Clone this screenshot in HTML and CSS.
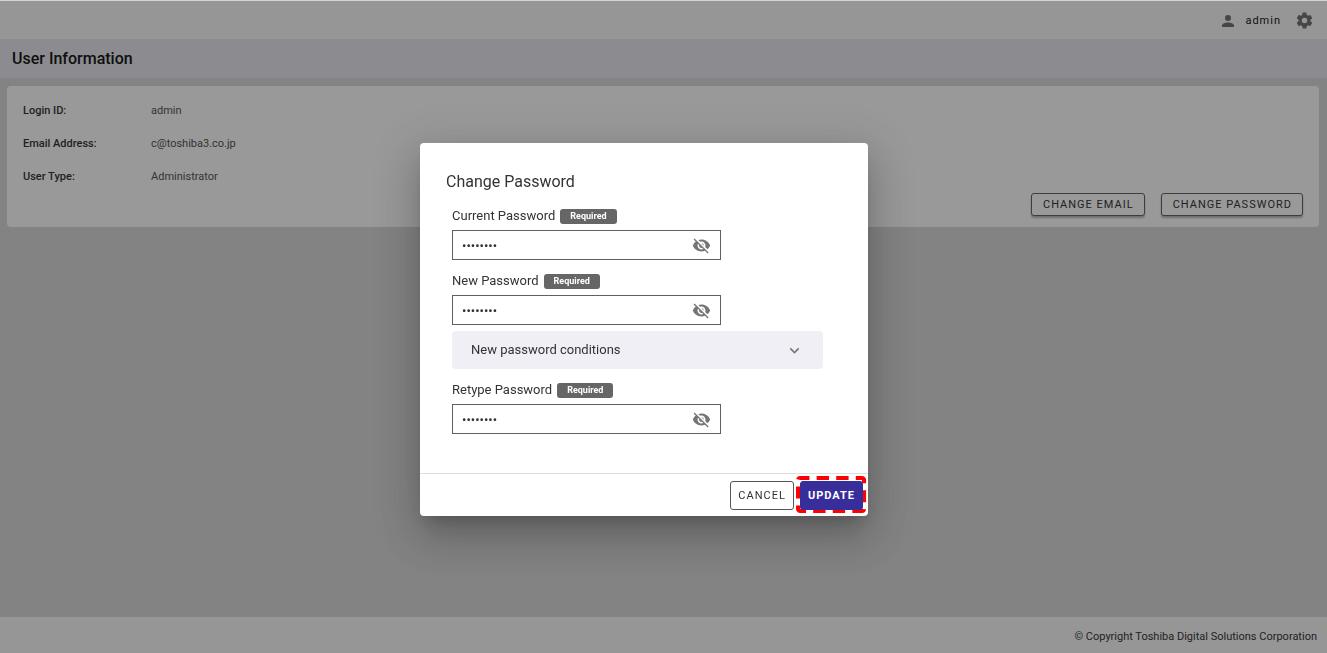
FILE: index.html
```html
<!DOCTYPE html>
<html lang="en">
<head>
<meta charset="utf-8">
<title>User Information</title>
<link rel="stylesheet" href="styles.css">
</head>
<body>
<svg class="sprite" aria-hidden="true">
  <symbol id="eye-off" viewBox="0 0 24 24"><path d="M12 7c2.76 0 5 2.24 5 5 0 .65-.13 1.26-.36 1.83l2.92 2.92c1.51-1.26 2.7-2.89 3.43-4.75-1.73-4.39-6-7.5-11-7.5-1.4 0-2.74.25-3.98.7l2.16 2.16C10.74 7.13 11.35 7 12 7zM2 4.27l2.28 2.28.46.46C3.08 8.3 1.78 10.02 1 12c1.73 4.39 6 7.5 11 7.5 1.55 0 3.03-.3 4.38-.84l.42.42L19.73 22 21 20.73 3.27 3 2 4.27zM7.53 9.8l1.55 1.55c-.05.21-.08.43-.08.65 0 1.66 1.34 3 3 3 .22 0 .44-.03.65-.08l1.55 1.55c-.67.33-1.41.53-2.2.53-2.76 0-5-2.24-5-5 0-.79.2-1.53.53-2.2zm4.31-.78 3.15 3.15.02-.16c0-1.66-1.34-3-3-3l-.17.01z"/></symbol>
</svg>
<div class="page">
  <header class="topbar">
    <button class="user" type="button">
      <svg class="user-icon" viewBox="0 0 24 24" aria-hidden="true"><path d="M12 4a4 4 0 1 1 0 8 4 4 0 0 1 0-8zm0 10c4.42 0 8 1.79 8 4v2H4v-2c0-2.21 3.58-4 8-4z"/></svg>
      <span>admin</span>
    </button>
    <button class="icon-button" type="button" aria-label="Settings">
      <svg class="gear-icon" viewBox="0 0 24 24" aria-hidden="true"><path d="M12 15.5A3.5 3.5 0 0 1 8.5 12 3.5 3.5 0 0 1 12 8.5a3.5 3.5 0 0 1 3.5 3.5 3.5 3.5 0 0 1-3.5 3.5m7.43-2.53c.04-.32.07-.64.07-.97s-.03-.66-.07-1l2.11-1.63c.19-.15.24-.42.12-.64l-2-3.46c-.12-.22-.39-.31-.61-.22l-2.49 1c-.52-.39-1.06-.73-1.69-.98l-.37-2.65A.506.506 0 0 0 14 2h-4c-.25 0-.46.18-.5.42l-.37 2.65c-.63.25-1.17.59-1.69.98l-2.49-1c-.22-.09-.49 0-.61.22l-2 3.46c-.13.22-.07.49.12.64L4.57 11c-.04.34-.07.67-.07 1s.03.65.07.97l-2.11 1.66c-.19.15-.25.42-.12.64l2 3.46c.12.22.39.3.61.22l2.49-1.01c.52.4 1.06.74 1.69.99l.37 2.65c.04.24.25.42.5.42h4c.25 0 .46-.18.5-.42l.37-2.65c.63-.26 1.17-.59 1.69-.99l2.49 1.01c.22.08.49 0 .61-.22l2-3.46c.12-.22.07-.49-.12-.64l-2.11-1.66z"/></svg>
    </button>
  </header>
  <h1 class="page-title">User Information</h1>
  <main class="content">
    <section class="card">
      <dl class="details">
        <dt>Login ID:</dt><dd>admin</dd>
        <dt>Email Address:</dt><dd>c@toshiba3.co.jp</dd>
        <dt>User Type:</dt><dd>Administrator</dd>
      </dl>
      <div class="card-actions">
        <button class="btn btn-card" type="button">CHANGE EMAIL</button>
        <button class="btn btn-card" type="button">CHANGE PASSWORD</button>
      </div>
    </section>
  </main>
  <footer class="footer">© Copyright Toshiba Digital Solutions Corporation</footer>
</div>

<div class="overlay">
  <form class="dialog" role="dialog" aria-labelledby="dialog-title">
    <div class="dialog-body">
      <h2 class="dialog-title" id="dialog-title">Change Password</h2>
      <div class="fields">
        <div class="field">
          <div class="field-head"><label for="current">Current Password</label><span class="badge">Required</span></div>
          <div class="input-box">
            <input id="current" type="password" value="password">
            <button class="icon-button" type="button" aria-label="Show current password"><svg class="eye-icon"><use href="#eye-off"/></svg></button>
          </div>
        </div>
        <div class="field">
          <div class="field-head"><label for="new">New Password</label><span class="badge">Required</span></div>
          <div class="input-box">
            <input id="new" type="password" value="password">
            <button class="icon-button" type="button" aria-label="Show new password"><svg class="eye-icon"><use href="#eye-off"/></svg></button>
          </div>
          <button class="conditions" type="button" aria-expanded="false">
            <span>New password conditions</span>
            <svg class="chevron" viewBox="0 0 24 24" aria-hidden="true"><path d="M7.41 8.58 12 13.17l4.59-4.59L18 10l-6 6-6-6z"/></svg>
          </button>
        </div>
        <div class="field">
          <div class="field-head"><label for="retype">Retype Password</label><span class="badge">Required</span></div>
          <div class="input-box">
            <input id="retype" type="password" value="password">
            <button class="icon-button" type="button" aria-label="Show retyped password"><svg class="eye-icon"><use href="#eye-off"/></svg></button>
          </div>
        </div>
      </div>
    </div>
    <div class="dialog-actions">
      <button class="btn btn-dialog" type="button">CANCEL</button>
      <div class="highlight">
        <svg class="marker" viewBox="0 0 70 39" preserveAspectRatio="none" aria-hidden="true">
          <rect class="marker-base" x="3" y="3" width="64" height="33" rx="2"/>
          <rect class="marker-dash" x="3" y="3" width="64" height="33" rx="2"/>
        </svg>
        <button class="btn btn-dialog btn-primary" type="submit">UPDATE</button>
      </div>
    </div>
  </form>
</div>
</body>
</html>
```
FILE: styles.css
```css
* { box-sizing: border-box; }
body {
  margin: 0;
  font-family: Roboto, "Liberation Sans", sans-serif;
  font-size: 11px;
  line-height: 16px;
  color: #222;
}
button, input { font: inherit; color: inherit; margin: 0; }
button { border: 0; padding: 0; background: none; cursor: pointer; }
svg { display: block; fill: currentColor; }
.sprite { position: absolute; width: 0; height: 0; }

.page {
  min-height: 100vh;
  display: flex;
  flex-direction: column;
  background: #d7d7d7;
}
.topbar {
  display: flex;
  align-items: center;
  justify-content: flex-end;
  gap: 14px;
  height: 39px;
  padding: 2px 13px 0 0;
  background: #fafafa;
}
.user {
  display: flex;
  align-items: center;
  gap: 8px;
  letter-spacing: 1px;
  color: #000;
}
.user-icon { width: 18px; height: 18px; color: #666; }
.gear-icon { width: 19px; height: 19px; color: #666; }
.page-title {
  margin: 0;
  padding: 8px 12px 7px;
  font-size: 16px;
  line-height: 24px;
  font-weight: 500;
  color: #000;
  background: #e6e6ee;
}
.content { flex: 1; padding: 8px 8px 8px 7px; }
.card {
  padding: 17px 16px 11px;
  border-radius: 4px;
  background: #fff;
}
.details {
  display: grid;
  grid-template-columns: 128px 1fr;
  row-gap: 17px;
  margin: 0;
}
.details dt { font-weight: 500; }
.details dd { margin: 0; color: #444; }
.card-actions {
  display: flex;
  justify-content: flex-end;
  gap: 16px;
  padding-top: 8px;
}
.footer {
  height: 36px;
  padding: 12px 10px 8px;
  text-align: right;
  background: #fafafa;
}

.btn {
  border: 1px solid #555;
  border-radius: 3px;
  letter-spacing: 1px;
  white-space: nowrap;
}
.btn-card {
  height: 23px;
  padding: 0 10px 0 11px;
  background: #fff;
  box-shadow: 0 2px 2px rgba(0, 0, 0, 0.3);
}

.overlay {
  position: fixed;
  inset: 0;
  display: flex;
  align-items: center;
  justify-content: center;
  padding: 5px 39px 0 0;
  border-top: 1px solid #d3d5d5;
  background: rgba(33, 33, 33, 0.46);
}
.dialog {
  width: 448px;
  max-width: 100%;
  border-radius: 4px;
  color: #333;
  background: #fff;
  box-shadow: 0 11px 15px -7px rgba(0, 0, 0, 0.2),
    0 24px 38px 3px rgba(0, 0, 0, 0.14),
    0 9px 46px 8px rgba(0, 0, 0, 0.12);
}
.dialog-body { padding: 27px 26px 39px; }
.dialog-title {
  margin: 0;
  font-size: 16px;
  line-height: 24px;
  font-weight: 400;
}
.fields {
  display: flex;
  flex-direction: column;
  gap: 13px;
  padding: 14px 19px 0 6px;
}
.field-head {
  display: flex;
  align-items: center;
  gap: 5px;
  margin-bottom: 6px;
  font-size: 13px;
}
.badge {
  padding: 0 10px;
  border-radius: 3px;
  background: #666;
  color: #fff;
  font-size: 9px;
  line-height: 15px;
  font-weight: 700;
}
.input-box {
  display: flex;
  align-items: center;
  width: 269px;
  height: 30px;
  padding: 1px 9px 0;
  border: 1px solid #606060;
}
.input-box input {
  flex: 1;
  min-width: 0;
  border: 0;
  padding: 0;
  outline: 0;
  background: none;
  font-size: 13px;
}
.eye-icon { width: 19px; height: 19px; color: #757575; }
.conditions {
  display: flex;
  align-items: center;
  justify-content: space-between;
  width: 100%;
  height: 38px;
  margin-top: 6px;
  padding: 0 19px;
  border-radius: 4px;
  background: #f0eff5;
  font-size: 13px;
}
.chevron { width: 19px; height: 19px; color: #757575; }
.dialog-actions {
  display: flex;
  justify-content: flex-end;
  gap: 6px;
  padding: 7px 5px 6px;
  border-top: 1px solid #ddd;
}
.btn-dialog { height: 29px; padding: 0 7px; }
.btn-primary {
  position: relative;
  border-color: #372e9b;
  background: #372e9b;
  color: #fff;
  font-weight: 700;
}
.highlight { position: relative; }
.marker {
  position: absolute;
  top: -6px;
  left: -5px;
  width: calc(100% + 9px);
  height: calc(100% + 10px);
  pointer-events: none;
}
.marker rect { fill: none; stroke-width: 4; }
.marker .marker-base { stroke: #fff; }
.marker .marker-dash { stroke: #f00; stroke-dasharray: 12 7; stroke-dashoffset: 3; }
```
